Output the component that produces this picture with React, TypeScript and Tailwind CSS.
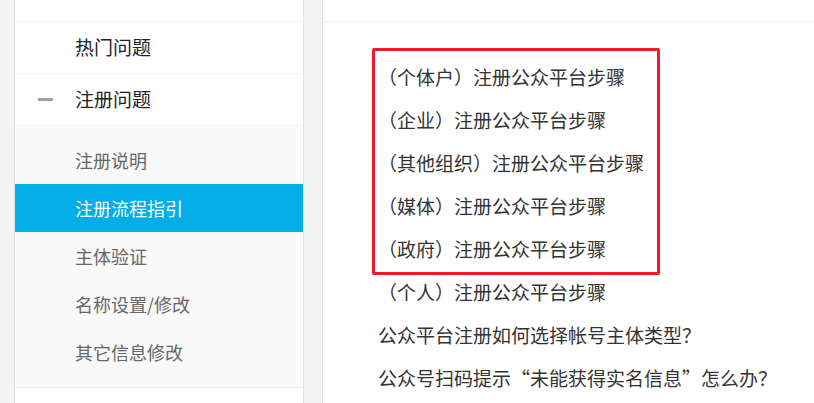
const subItems = ["注册说明", "注册流程指引", "主体验证", "名称设置/修改", "其它信息修改"];

const questions = [
  "（个体户）注册公众平台步骤",
  "（企业）注册公众平台步骤",
  "（其他组织）注册公众平台步骤",
  "（媒体）注册公众平台步骤",
  "（政府）注册公众平台步骤",
  "（个人）注册公众平台步骤",
  "公众平台注册如何选择帐号主体类型？",
  "公众号扫码提示“未能获得实名信息”怎么办？",
];

function Sidebar() {
  return (
    <aside className="w-[290px] shrink-0 border-x border-[#e1e1e1] bg-white">
      <div className="h-[22px] border-b border-[#f0f0f0]" />
      <div className="flex h-[52px] items-center border-b border-[#f0f0f0] pl-[60px] text-[19px] text-[#222]">
        热门问题
      </div>
      <div className="relative flex h-[50px] items-center pl-[60px] text-[19px] text-[#222]">
        <span className="absolute left-[23px] top-[24px] h-[3px] w-[15px] bg-[#9aa1a9]" />
        注册问题
      </div>
      <ul className="border-b border-[#f0f0f0] bg-[#f9f9f9] pb-[11px] pt-[12px] text-[18px]">
        {subItems.map((item) => {
          const active = item === "注册流程指引";
          return (
            <li
              key={item}
              className={
                active
                  ? "flex h-[48px] items-center bg-[#02ade8] pl-[60px] text-white"
                  : "flex h-[48px] items-center pl-[60px] text-[#666]"
              }
            >
              {item}
            </li>
          );
        })}
      </ul>
    </aside>
  );
}

export default function App() {
  return (
    <div
      className="flex h-[403px] w-[814px] overflow-hidden bg-[#f4f4f4]"
      style={{ fontFamily: '"Noto Sans CJK SC", "Liberation Sans", sans-serif' }}
    >
      <div className="w-[14px] shrink-0" />
      <Sidebar />
      <div className="w-[18px] shrink-0" />
      <main className="flex-1 border-l border-[#e1e1e1] bg-white">
        <div className="h-[22px] border-b border-[#f0f0f0]" />
        <div className="relative pl-[55px] pt-[34px]">
          <ul className="text-[19px] text-[#333]">
            {questions.map((q) => (
              <li key={q} className="flex h-[43px] items-center">
                {q}
              </li>
            ))}
          </ul>
          {/* annotation box */}
          <div className="absolute left-[49px] top-[26px] h-[227px] w-[288px] rounded-[2px] border-[3px] border-[#ec1c2a]" />
        </div>
      </main>
    </div>
  );
}
